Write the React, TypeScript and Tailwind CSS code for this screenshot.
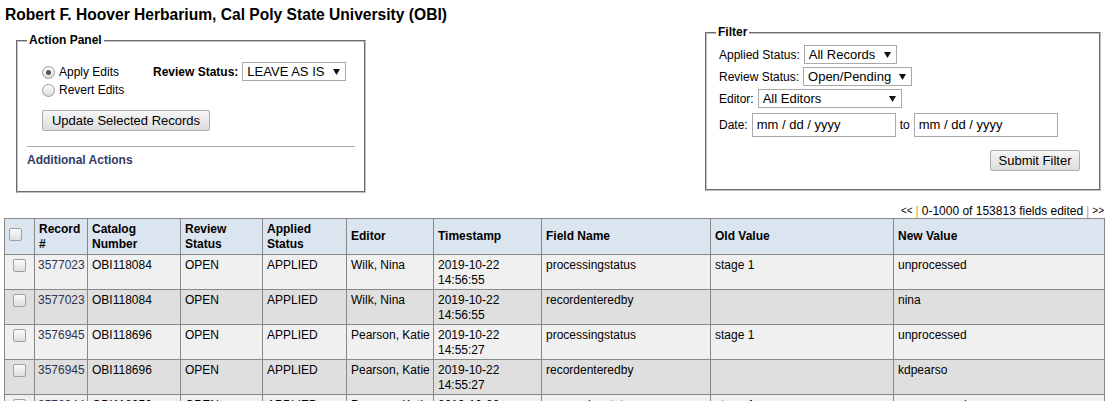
import React from 'react';

type EditRow = {
  record: string;
  catalog: string;
  review: string;
  applied: string;
  editor: string;
  date: string;
  time: string;
  field: string;
  oldValue: string;
  newValue: string;
};

const rows: EditRow[] = [
  { record: '3577023', catalog: 'OBI118084', review: 'OPEN', applied: 'APPLIED', editor: 'Wilk, Nina', date: '2019-10-22', time: '14:56:55', field: 'processingstatus', oldValue: 'stage 1', newValue: 'unprocessed' },
  { record: '3577023', catalog: 'OBI118084', review: 'OPEN', applied: 'APPLIED', editor: 'Wilk, Nina', date: '2019-10-22', time: '14:56:55', field: 'recordenteredby', oldValue: '', newValue: 'nina' },
  { record: '3576945', catalog: 'OBI118696', review: 'OPEN', applied: 'APPLIED', editor: 'Pearson, Katie', date: '2019-10-22', time: '14:55:27', field: 'processingstatus', oldValue: 'stage 1', newValue: 'unprocessed' },
  { record: '3576945', catalog: 'OBI118696', review: 'OPEN', applied: 'APPLIED', editor: 'Pearson, Katie', date: '2019-10-22', time: '14:55:27', field: 'recordenteredby', oldValue: '', newValue: 'kdpearso' },
  { record: '3576944', catalog: 'OBI118250', review: 'OPEN', applied: 'APPLIED', editor: 'Pearson, Katie', date: '2019-10-22', time: '14:54:48', field: 'processingstatus', oldValue: 'stage 1', newValue: 'unprocessed' },
  { record: '3576944', catalog: 'OBI118250', review: 'OPEN', applied: 'APPLIED', editor: 'Pearson, Katie', date: '2019-10-22', time: '14:54:48', field: 'recordenteredby', oldValue: '', newValue: 'kdpearso' },
];

function Arrow() {
  return (
    <svg width="7" height="6" viewBox="0 0 7 6" className="shrink-0">
      <polygon points="0,0 7,0 3.5,6" fill="#111" />
    </svg>
  );
}

// form controls keep the browser's 13px; page text is 12px
function FakeSelect({ label, width }: { label: string; width: string }) {
  return (
    <span
      className={`inline-flex h-[19px] items-center justify-between border border-[#a9a9a9] bg-white pl-[4px] pr-[5px] text-[13px] leading-none ${width}`}
    >
      <span>{label}</span>
      <Arrow />
    </span>
  );
}

function Radio({ checked }: { checked?: boolean }) {
  return (
    <span className="mr-[4px] inline-flex size-[13px] items-center justify-center rounded-full border border-[#9a9a9a] bg-gradient-to-b from-[#fdfdfd] to-[#dcdcdc]">
      {checked && <span className="size-[5px] rounded-full bg-[#555]" />}
    </span>
  );
}

function Checkbox() {
  return (
    <span className="inline-block size-[13px] rounded-[2px] border border-[#9f9f9f] bg-gradient-to-b from-[#fbfbfb] to-[#dedede]" />
  );
}

function GrayButton({ children, className }: { children: React.ReactNode; className?: string }) {
  return (
    <button
      type="button"
      className={`h-[21px] rounded-[2px] border border-[#adadad] bg-gradient-to-b from-[#f6f6f6] to-[#dddddd] px-[7px] text-[13px] leading-none text-black ${className ?? ''}`}
    >
      {children}
    </button>
  );
}

function ActionPanel() {
  return (
    <fieldset className="ml-[16px] mt-[8px] w-[350px] border-2 border-[#c0c0c0] pb-[23px] pl-[9px] pr-[9px] [border-style:groove]">
      <legend className="px-[2px] font-bold leading-[15px]">Action Panel</legend>
      <div className="mt-[15px] flex pl-[15px]">
        <div className="w-[111px]">
          <label className="flex h-[18px] items-center">
            <Radio checked />
            Apply Edits
          </label>
          <label className="flex h-[18px] items-center">
            <Radio />
            Revert Edits
          </label>
        </div>
        <div className="-mt-[1px] flex h-[19px] items-center gap-[4px]">
          <span className="font-bold">Review Status:</span>
          <FakeSelect label="LEAVE AS IS" width="w-[104px]" />
        </div>
      </div>
      <div className="mt-[11px] pl-[15px]">
        <GrayButton className="w-[168px]">Update Selected Records</GrayButton>
      </div>
      <div className="mt-[15px] h-0 border-t border-[#aaa]" />
      <div className="mt-[6px] font-bold leading-[15px] text-[#333b66]">Additional Actions</div>
    </fieldset>
  );
}

function DateBox() {
  return (
    <span className="inline-flex h-[24px] w-[144px] items-center border border-[#a9a9a9] bg-white pl-[4px] text-[13px]">
      mm / dd / yyyy
    </span>
  );
}

function FilterPanel() {
  return (
    <fieldset className="mr-[10px] w-[396px] border-2 border-[#c0c0c0] pb-[18px] pl-[9px] pr-[9px] [border-style:groove]">
      <legend className="px-[2px] font-bold leading-[15px]">Filter</legend>
      <div className="mt-[5px] flex flex-col gap-[3px] pl-[3px]">
        <div className="flex h-[19px] items-center gap-[4px]">
          <span>Applied Status:</span>
          <FakeSelect label="All Records" width="w-[93px]" />
        </div>
        <div className="flex h-[19px] items-center gap-[4px]">
          <span>Review Status:</span>
          <FakeSelect label="Open/Pending" width="w-[109px]" />
        </div>
        <div className="flex h-[19px] items-center gap-[4px]">
          <span>Editor:</span>
          <FakeSelect label="All Editors" width="w-[144px]" />
        </div>
        <div className="mt-[2px] flex h-[24px] items-center gap-[4px]">
          <span>Date:</span>
          <DateBox />
          <span>to</span>
          <DateBox />
        </div>
      </div>
      <div className="mt-[13px] flex justify-end pr-[10px]">
        <GrayButton className="w-[90px]">Submit Filter</GrayButton>
      </div>
    </fieldset>
  );
}

const headers: { label: React.ReactNode; width: string }[] = [
  { label: <Checkbox />, width: 'w-[30px]' },
  { label: <>Record<br />#</>, width: 'w-[53px]' },
  { label: <>Catalog<br />Number</>, width: 'w-[93px]' },
  { label: <>Review<br />Status</>, width: 'w-[82px]' },
  { label: <>Applied<br />Status</>, width: 'w-[84px]' },
  { label: 'Editor', width: 'w-[87px]' },
  { label: 'Timestamp', width: 'w-[108px]' },
  { label: 'Field Name', width: 'w-[169px]' },
  { label: 'Old Value', width: 'w-[183px]' },
  { label: 'New Value', width: 'w-[211px]' },
];

function EditsTable() {
  return (
    <table className="ml-[4px] w-[1100px] table-fixed border-collapse text-[12px] leading-[15px]">
      <thead>
        <tr className="h-[36px] bg-[#dbe5f0]">
          {headers.map((h, i) => (
            <th
              key={i}
              className={`border border-[#888] px-[4px] text-left align-middle font-bold ${h.width} ${i === 0 ? 'text-center' : ''}`}
            >
              {h.label}
            </th>
          ))}
        </tr>
      </thead>
      <tbody>
        {rows.map((r, i) => (
          <tr key={i} className={`h-[35px] ${i % 2 === 0 ? 'bg-[#f0f0f0]' : 'bg-[#dfdfdf]'}`}>
            <td className="border border-[#888] pt-[4px] text-center align-top">
              <Checkbox />
            </td>
            <td className="border border-[#888] px-[3px] pt-[3px] align-top text-[#2b3550]">{r.record}</td>
            <td className="border border-[#888] px-[4px] pt-[3px] align-top">{r.catalog}</td>
            <td className="border border-[#888] px-[4px] pt-[3px] align-top">{r.review}</td>
            <td className="border border-[#888] px-[4px] pt-[3px] align-top">{r.applied}</td>
            <td className="whitespace-nowrap border border-[#888] pl-[4px] pr-0 pt-[3px] align-top">{r.editor}</td>
            <td className="border border-[#888] px-[4px] pt-[3px] align-top">
              {r.date}
              <br />
              {r.time}
            </td>
            <td className="border border-[#888] px-[4px] pt-[3px] align-top">{r.field}</td>
            <td className="border border-[#888] px-[4px] pt-[3px] align-top">{r.oldValue}</td>
            <td className="border border-[#888] px-[4px] pt-[3px] align-top">{r.newValue}</td>
          </tr>
        ))}
      </tbody>
    </table>
  );
}

export default function App() {
  return (
    <div className="min-h-screen bg-white font-['Liberation_Sans',Arial,sans-serif] text-[12px] text-black">
      <h1 className="px-[5px] pt-[5px] text-[15.6px] font-bold leading-[20px]">
        Robert F. Hoover Herbarium, Cal Poly State University (OBI)
      </h1>
      <div className="flex items-start justify-between">
        <ActionPanel />
        <FilterPanel />
      </div>
      <div className="mt-[11px] flex justify-end pr-[7px] text-[12px] leading-[14px]">
        <span className="text-[10px]">&lt;&lt;</span>
        <span className="px-[3px] text-[#e39a2c]">|</span>
        <span>0-1000 of 153813 fields edited</span>
        <span className="px-[3px] text-[#e39a2c]">|</span>
        <span className="text-[10px]">&gt;&gt;</span>
      </div>
      <EditsTable />
    </div>
  );
}
